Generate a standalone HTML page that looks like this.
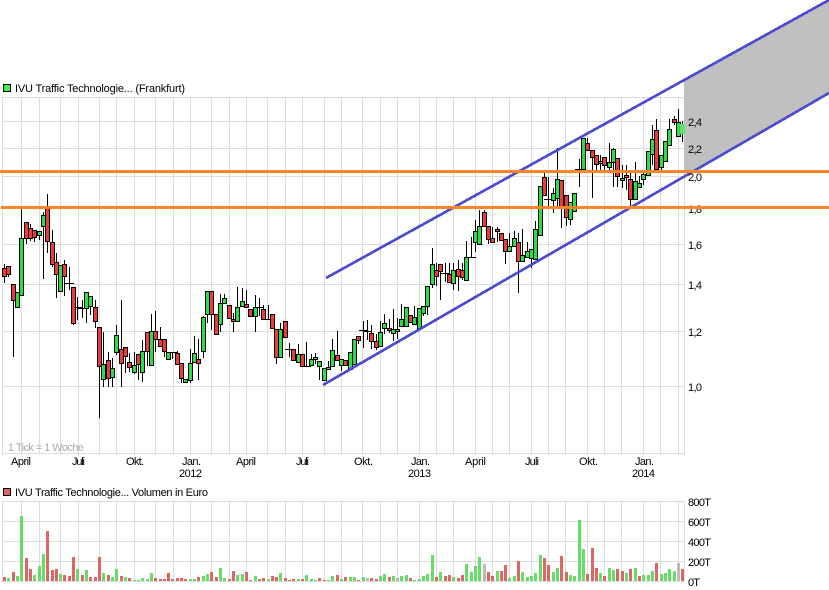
<!DOCTYPE html>
<html><head><meta charset="utf-8"><style>
html,body{margin:0;padding:0;background:#fff;width:829px;height:590px;overflow:hidden}
svg{display:block}
text{font-family:"Liberation Sans",sans-serif;font-size:11px;fill:#000}
</style></head><body>
<svg width="829" height="590" viewBox="0 0 829 590" xmlns="http://www.w3.org/2000/svg">
<g fill="none" stroke="#dcdcdc" shape-rendering="crispEdges">
<path d="M2 97.5H685M2 121.5H685M2 148.5H685M2 176.5H685M2 208.5H685M2 244.5H685M2 284.5H685M2 331.5H685M2 386.5H685M2 453.5H685M2 501.5H685M2 521.5H685M2 541.5H685M2 561.5H685M2 581.5H685"/>
<path d="M2.5 97V455M21.5 97V455M39.5 97V455M60.5 97V455M78.5 97V455M99.5 97V455M116.5 97V455M134.5 97V455M155.5 97V455M173.5 97V455M190.5 97V455M211.5 97V455M229.5 97V455M246.5 97V455M267.5 97V455M285.5 97V455M302.5 97V455M324.5 97V455M341.5 97V455M362.5 97V455M380.5 97V455M397.5 97V455M419.5 97V455M436.5 97V455M453.5 97V455M475.5 97V455M492.5 97V455M509.5 97V455M531.5 97V455M548.5 97V455M565.5 97V455M587.5 97V455M604.5 97V455M621.5 97V455M643.5 97V455M660.5 97V455M678.5 97V455M684.5 97V455"/>
<path d="M2.5 501V582M21.5 501V582M39.5 501V582M60.5 501V582M78.5 501V582M99.5 501V582M116.5 501V582M134.5 501V582M155.5 501V582M173.5 501V582M190.5 501V582M211.5 501V582M229.5 501V582M246.5 501V582M267.5 501V582M285.5 501V582M302.5 501V582M324.5 501V582M341.5 501V582M362.5 501V582M380.5 501V582M397.5 501V582M419.5 501V582M436.5 501V582M453.5 501V582M475.5 501V582M492.5 501V582M509.5 501V582M531.5 501V582M548.5 501V582M565.5 501V582M587.5 501V582M604.5 501V582M621.5 501V582M643.5 501V582M660.5 501V582M678.5 501V582M684.5 501V582"/>
</g>
<polygon points="684,81 829,1 829,93 693,171 684,171" fill="#c0c0c0"/>
<g fill="none" shape-rendering="crispEdges" stroke-width="1">
<path stroke="#000" d="M4.5 264V283M8.5 266V277M13.5 284V357M17.5 292V307M21.5 208V295M26.5 222V244M30.5 224V241M34.5 230V242M39.5 231V240M43.5 212V279M47.5 194V253M52.5 230V267M56.5 253V298M60.5 265V291M64.5 260V296M69.5 267V290M65 283.5h9M73.5 287V325M77.5 297V320M73 307.5h9M82.5 300V318M78 308.5h9M86.5 292V323M90.5 296V315M95.5 300V328M99.5 327V418M103.5 332V387M108.5 352V387M112.5 358V387M116.5 325V355M121.5 300V387M125.5 347V373M129.5 353V372M134.5 352V374M138.5 354V380M142.5 340V382M147.5 332V366M151.5 314V365M155.5 311V352M160.5 327V346M164.5 339V357M168.5 352V359M172.5 352V359M168 352.5h9M177.5 351V364M181.5 363V383M185.5 379V383M190.5 349V383M194.5 336V362M198.5 339V380M203.5 316V358M207.5 291V323M211.5 291V330M216.5 314V334M220.5 294V332M224.5 294V303M229.5 305V318M233.5 313V332M237.5 287V321M242.5 288V306M246.5 290V307M250.5 309V316M255.5 295V332M259.5 298V316M255 307.5h9M263.5 305V319M268.5 305V320M264 319.5h9M272.5 314V328M276.5 329V364M280.5 323V357M285.5 321V337M289.5 343V357M285 349.5h9M293.5 349V360M298.5 344V362M302.5 354V366M306.5 342V366M302 366.5h9M311.5 354V365M315.5 353V364M319.5 361V380M324.5 368V380M328.5 361V369M332.5 339V366M337.5 331V360M341.5 359V371M345.5 360V365M350.5 352V369M354.5 339V364M358.5 336V344M363.5 321V348M359 330.5h9M367.5 320V340M363 331.5h9M371.5 325V349M376.5 334V350M380.5 321V346M384.5 314V334M389.5 319V333M393.5 309V341M397.5 318V339M401.5 304V326M406.5 307V326M410.5 315V322M414.5 306V324M419.5 308V328M423.5 306V316M427.5 286V315M432.5 248V288M436.5 263V286M440.5 264V300M445.5 263V282M441 273.5h9M449.5 263V282M453.5 263V290M458.5 260V291M462.5 263V280M466.5 241V280M471.5 237V258M467 257.5h9M475.5 220V252M479.5 210V244M484.5 210V226M488.5 226V244M492.5 227V242M497.5 227V242M501.5 233V240M505.5 239V264M509.5 233V251M514.5 231V246M518.5 233V293M522.5 229V261M527.5 242V257M531.5 249V268M535.5 221V259M540.5 186V235M544.5 172V195M548.5 177V207M544 199.5h9M553.5 188V213M557.5 148V207M561.5 180V228M566.5 195V226M570.5 202V225M574.5 193V211M579.5 159V187M575 169.5h9M583.5 138V170M587.5 138V150M592.5 150V198M596.5 155V172M600.5 155V170M604.5 157V170M609.5 143V170M613.5 148V187M617.5 158V187M622.5 165V188M626.5 165V190M630.5 172V207M635.5 162V199M639.5 176V187M643.5 170V185M648.5 151V175M652.5 125V165M656.5 119V171M661.5 155V170M665.5 141V161M669.5 119V145M674.5 116V125M678.5 109V136M682.5 121V142"/>
<path stroke="#000" fill="#ee3a3a" d="M2.5 268.5h4V276.5h-4zM6.5 266.5h4V274.5h-4zM11.5 284.5h4V300.5h-4zM24.5 222.5h4V238.5h-4zM28.5 228.5h4V238.5h-4zM32.5 230.5h4V237.5h-4zM45.5 207.5h4V241.5h-4zM50.5 242.5h4V264.5h-4zM54.5 262.5h4V274.5h-4zM62.5 264.5h4V276.5h-4zM71.5 287.5h4V323.5h-4zM93.5 307.5h4V321.5h-4zM97.5 327.5h4V366.5h-4zM106.5 360.5h4V378.5h-4zM119.5 349.5h4V363.5h-4zM123.5 347.5h4V356.5h-4zM127.5 362.5h4V367.5h-4zM136.5 354.5h4V364.5h-4zM145.5 332.5h4V351.5h-4zM153.5 331.5h4V339.5h-4zM158.5 339.5h4V346.5h-4zM162.5 339.5h4V351.5h-4zM175.5 353.5h4V364.5h-4zM179.5 363.5h4V378.5h-4zM196.5 359.5h4V363.5h-4zM209.5 291.5h4V314.5h-4zM214.5 314.5h4V334.5h-4zM227.5 305.5h4V318.5h-4zM231.5 319.5h4V321.5h-4zM244.5 304.5h4V307.5h-4zM248.5 309.5h4V316.5h-4zM261.5 309.5h4V319.5h-4zM270.5 314.5h4V328.5h-4zM274.5 329.5h4V357.5h-4zM283.5 321.5h4V337.5h-4zM291.5 349.5h4V360.5h-4zM300.5 354.5h4V366.5h-4zM335.5 355.5h4V360.5h-4zM343.5 360.5h4V365.5h-4zM356.5 336.5h4V340.5h-4zM369.5 333.5h4V341.5h-4zM374.5 341.5h4V347.5h-4zM387.5 328.5h4V330.5h-4zM408.5 315.5h4V322.5h-4zM434.5 270.5h4V276.5h-4zM438.5 264.5h4V271.5h-4zM447.5 274.5h4V282.5h-4zM456.5 269.5h4V276.5h-4zM460.5 270.5h4V277.5h-4zM482.5 212.5h4V226.5h-4zM486.5 226.5h4V239.5h-4zM490.5 238.5h4V242.5h-4zM495.5 229.5h4V231.5h-4zM499.5 233.5h4V240.5h-4zM503.5 239.5h4V251.5h-4zM516.5 242.5h4V261.5h-4zM542.5 177.5h4V195.5h-4zM559.5 180.5h4V207.5h-4zM564.5 195.5h4V217.5h-4zM585.5 143.5h4V150.5h-4zM590.5 150.5h4V157.5h-4zM594.5 155.5h4V164.5h-4zM602.5 157.5h4V165.5h-4zM615.5 158.5h4V176.5h-4zM624.5 175.5h4V177.5h-4zM628.5 179.5h4V199.5h-4zM654.5 130.5h4V169.5h-4zM672.5 119.5h4V122.5h-4z"/>
<path stroke="#000" fill="#2adf3f" d="M15.5 292.5h4V307.5h-4zM19.5 238.5h4V295.5h-4zM37.5 231.5h4V235.5h-4zM41.5 215.5h4V226.5h-4zM58.5 265.5h4V291.5h-4zM84.5 292.5h4V308.5h-4zM88.5 296.5h4V306.5h-4zM101.5 364.5h4V379.5h-4zM110.5 368.5h4V377.5h-4zM114.5 335.5h4V352.5h-4zM132.5 365.5h4V372.5h-4zM140.5 351.5h4V372.5h-4zM149.5 331.5h4V365.5h-4zM166.5 352.5h4V359.5h-4zM183.5 379.5h4V382.5h-4zM188.5 363.5h4V380.5h-4zM192.5 353.5h4V362.5h-4zM201.5 317.5h4V351.5h-4zM205.5 291.5h4V314.5h-4zM218.5 303.5h4V324.5h-4zM222.5 298.5h4V303.5h-4zM235.5 307.5h4V321.5h-4zM240.5 301.5h4V306.5h-4zM253.5 307.5h4V316.5h-4zM278.5 329.5h4V357.5h-4zM296.5 354.5h4V362.5h-4zM309.5 359.5h4V365.5h-4zM313.5 357.5h4V359.5h-4zM317.5 361.5h4V366.5h-4zM322.5 368.5h4V380.5h-4zM326.5 367.5h4V369.5h-4zM330.5 350.5h4V366.5h-4zM339.5 359.5h4V365.5h-4zM348.5 352.5h4V369.5h-4zM352.5 339.5h4V364.5h-4zM378.5 332.5h4V346.5h-4zM382.5 323.5h4V328.5h-4zM391.5 329.5h4V333.5h-4zM395.5 329.5h4V331.5h-4zM399.5 319.5h4V326.5h-4zM404.5 307.5h4V326.5h-4zM412.5 317.5h4V324.5h-4zM417.5 308.5h4V328.5h-4zM421.5 306.5h4V313.5h-4zM425.5 286.5h4V306.5h-4zM430.5 264.5h4V284.5h-4zM451.5 270.5h4V283.5h-4zM464.5 257.5h4V280.5h-4zM473.5 231.5h4V242.5h-4zM477.5 226.5h4V244.5h-4zM507.5 246.5h4V251.5h-4zM512.5 238.5h4V246.5h-4zM520.5 255.5h4V261.5h-4zM525.5 251.5h4V257.5h-4zM529.5 249.5h4V258.5h-4zM533.5 229.5h4V259.5h-4zM538.5 186.5h4V235.5h-4zM551.5 193.5h4V200.5h-4zM555.5 179.5h4V198.5h-4zM568.5 202.5h4V219.5h-4zM572.5 193.5h4V211.5h-4zM581.5 138.5h4V169.5h-4zM598.5 161.5h4V163.5h-4zM607.5 162.5h4V167.5h-4zM611.5 149.5h4V162.5h-4zM620.5 178.5h4V180.5h-4zM633.5 181.5h4V199.5h-4zM637.5 183.5h4V187.5h-4zM641.5 174.5h4V179.5h-4zM646.5 151.5h4V175.5h-4zM650.5 139.5h4V154.5h-4zM659.5 155.5h4V167.5h-4zM663.5 141.5h4V161.5h-4zM667.5 129.5h4V145.5h-4zM676.5 122.5h4V136.5h-4z"/>
<path fill="#66e066" d="M680 124h5v10h-5z"/>
</g>
<g fill="none" stroke-width="3" shape-rendering="crispEdges">
<path stroke="#dd6666" d="M4.5 581v-4M13.5 581v-9M26.5 581v-23M30.5 581v-12M47.5 581v-50M52.5 581v-11M56.5 581v-12M64.5 581v-6M69.5 581v-5M73.5 581v-24M82.5 581v-6M90.5 581v-4M95.5 581v-4M99.5 581v-24M108.5 581v-6M121.5 581v-5M129.5 581v-3M155.5 581v-3M160.5 581v-2M164.5 581v-2M168.5 581v-8M172.5 581v-2M177.5 581v-3M181.5 581v-3M185.5 581v-2M198.5 581v-4M211.5 581v-9M216.5 581v-4M229.5 581v-2M233.5 581v-10M246.5 581v-9M250.5 581v-1M259.5 581v-2M263.5 581v-3M272.5 581v-5M276.5 581v-4M285.5 581v-3M289.5 581v-1M293.5 581v-2M302.5 581v-2M319.5 581v-3M324.5 581v-1M337.5 581v-6M345.5 581v-4M358.5 581v-1M371.5 581v-3M376.5 581v-2M389.5 581v-4M410.5 581v-3M436.5 581v-4M445.5 581v-5M449.5 581v-6M458.5 581v-3M462.5 581v-6M488.5 581v-9M492.5 581v-5M501.5 581v-10M505.5 581v-16M518.5 581v-20M544.5 581v-23M548.5 581v-16M561.5 581v-25M566.5 581v-9M587.5 581v-7M592.5 581v-33M596.5 581v-13M604.5 581v-5M617.5 581v-12M622.5 581v-10M630.5 581v-12M639.5 581v-5M656.5 581v-18M682.5 581v-12"/>
<path stroke="#66dd66" d="M8.5 581v-3M17.5 581v-5M21.5 581v-65M34.5 581v-6M39.5 581v-15M43.5 581v-27M60.5 581v-7M77.5 581v-12M86.5 581v-11M103.5 581v-8M112.5 581v-4M116.5 581v-12M125.5 581v-4M134.5 581v-1M138.5 581v-1M142.5 581v-3M147.5 581v-2M151.5 581v-8M190.5 581v-2M194.5 581v-2M203.5 581v-5M207.5 581v-7M220.5 581v-13M224.5 581v-3M237.5 581v-6M242.5 581v-7M255.5 581v-5M268.5 581v-2M280.5 581v-8M298.5 581v-2M306.5 581v-6M311.5 581v-2M315.5 581v-1M328.5 581v-1M332.5 581v-5M341.5 581v-2M350.5 581v-4M354.5 581v-4M363.5 581v-4M380.5 581v-5M384.5 581v-7M393.5 581v-5M401.5 581v-5M406.5 581v-6M414.5 581v-1M419.5 581v-2M423.5 581v-5M427.5 581v-7M432.5 581v-26M440.5 581v-9M453.5 581v-4M466.5 581v-17M471.5 581v-9M475.5 581v-15M479.5 581v-24M497.5 581v-10M509.5 581v-3M514.5 581v-5M522.5 581v-9M527.5 581v-4M531.5 581v-5M535.5 581v-8M540.5 581v-26M553.5 581v-9M557.5 581v-13M570.5 581v-6M574.5 581v-5M579.5 581v-61M583.5 581v-32M600.5 581v-8M609.5 581v-13M613.5 581v-11M626.5 581v-8M635.5 581v-13M643.5 581v-6M648.5 581v-6M652.5 581v-10M661.5 581v-7M665.5 581v-8M669.5 581v-12M674.5 581v-10"/>
<path stroke="#bbbbbb" d="M367.5 581v-3M397.5 581v-3M484.5 581v-17M678.5 581v-18"/>
</g>
<g fill="none" stroke="#4c4cd0" stroke-width="2.7" shape-rendering="crispEdges">
<line x1="326" y1="278" x2="829" y2="0"/>
<line x1="323" y1="385" x2="829" y2="93"/>
</g>
<rect x="3.5" y="84.5" width="7" height="7" fill="#44ee44" stroke="#000" shape-rendering="crispEdges"/>
<rect x="3.5" y="488.5" width="7" height="7" fill="#dd6666" stroke="#000" shape-rendering="crispEdges"/>
<text x="15" y="92" textLength="170">IVU Traffic Technologie... (Frankfurt)</text>
<text x="15" y="496" textLength="193">IVU Traffic Technologie... Volumen in Euro</text>
<text x="8" y="451" textLength="76" style="fill:#aaa">1 Tick = 1 Woche</text>
<text x="11" y="465" textLength="20">April</text>
<text x="72" y="465" textLength="13">Juli</text>
<text x="126" y="465" textLength="18">Okt.</text>
<text x="182" y="465" textLength="19">Jan.</text>
<text x="179" y="477" textLength="23">2012</text>
<text x="236" y="465" textLength="20">April</text>
<text x="296" y="465" textLength="13">Juli</text>
<text x="354" y="465" textLength="19">Okt.</text>
<text x="411" y="465" textLength="19">Jan.</text>
<text x="408" y="477" textLength="23">2013</text>
<text x="465" y="465" textLength="21">April</text>
<text x="525" y="465" textLength="14">Juli</text>
<text x="579" y="465" textLength="19">Okt.</text>
<text x="635" y="465" textLength="19">Jan.</text>
<text x="632" y="477" textLength="23">2014</text>
<text x="688" y="126" textLength="14">2,4</text>
<text x="688" y="153" textLength="14">2,2</text>
<text x="688" y="181" textLength="14">2,0</text>
<text x="688" y="213" textLength="14">1,8</text>
<text x="688" y="249" textLength="14">1,6</text>
<text x="688" y="289" textLength="14">1,4</text>
<text x="688" y="336" textLength="14">1,2</text>
<text x="688" y="391" textLength="14">1,0</text>
<text x="688" y="506" textLength="23">800T</text>
<text x="688" y="526" textLength="23">600T</text>
<text x="688" y="546" textLength="23">400T</text>
<text x="688" y="566" textLength="23">200T</text>
<text x="688" y="586" textLength="12">0T</text>
<g shape-rendering="crispEdges" fill="#ff842a">
<rect x="0" y="170" width="829" height="3"/>
<rect x="1" y="206" width="828" height="3"/>
</g>
</svg>
</body></html>
